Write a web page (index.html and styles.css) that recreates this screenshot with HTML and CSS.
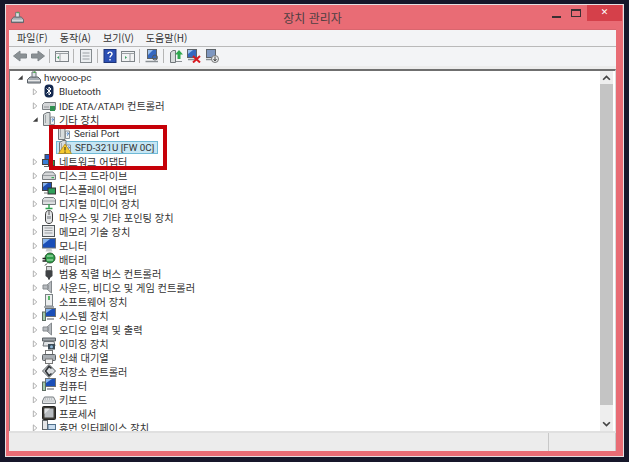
FILE: index.html
```html
<!DOCTYPE html>
<html lang="ko">
<head>
    <meta charset="UTF-8">
    <title>장치 관리자</title>
    <link rel="stylesheet" href="styles.css">
</head>
<body>

<svg class="sprite" xmlns="http://www.w3.org/2000/svg">
    <symbol id="open" viewBox="0 0 8 8"><path d="M1 6.500L6.500 1.500V6.500Z" fill="#3c3c3c"/></symbol>
    <symbol id="closed" viewBox="0 0 8 8"><path d="M1.500 1L5.500 4.500L1.500 8Z" fill="#fff" stroke="#a6a6a6"/></symbol>

    <symbol id="pc" viewBox="0 0 14 14"><path d="M0.500 9.500L3 7H11L13.500 9.500V13H0.500Z" fill="#a8aeb4" stroke="#5a6066"/><path d="M1 10.500H13" stroke="#e8e8e8"/><path d="M5 2H9V7H5Z" fill="#dde2e6" stroke="#6a7076"/><path d="M7.500 1L9 3H6Z" fill="#4fb04f"/></symbol>
    <symbol id="bt" viewBox="0 0 14 14"><rect x="2.500" y="0.500" width="9" height="13" rx="4" fill="#14294f"/><path d="M4.500 4.500L9 9L7 11V3L9 5L4.500 9.500" fill="none" stroke="#fff"/></symbol>
    <symbol id="ide" viewBox="0 0 14 14"><path d="M0.500 6.500L2.500 4.500H13.500V11.500H0.500Z" fill="#d4d6d8" stroke="#7b8084"/><rect x="8" y="8" width="5" height="5" fill="#2f8f4f"/><path d="M2 9H7" stroke="#909498"/></symbol>
    <symbol id="other" viewBox="0 0 14 14"><path d="M1.500 2.500L5 0.500H8V13.500H1.500Z" fill="#d8dcdc" stroke="#70767a"/><path d="M8.500 5H12.500V12.500H8.500Z" fill="#eef2f4" stroke="#8a9094"/><path d="M3.500 3V11" stroke="#a0a6aa"/><path d="M10 7.500C10 6.500 11.500 6.500 11.500 7.500C11.500 8.300 10.500 8.300 10.500 9.500" fill="none" stroke="#2f6fc0"/></symbol>
    <symbol id="warn" viewBox="0 0 14 14"><path d="M7 4L13.500 13.500H0.500Z" fill="#f6c92e" stroke="#a07a10" stroke-width="0.600"/><path d="M7 7V10.500M7 11.500V12.800" stroke="#222"/></symbol>
    <symbol id="net" viewBox="0 0 14 14"><rect x="3" y="0.500" width="6" height="5" fill="#2a5fc4" stroke="#444"/><rect x="0.500" y="5.500" width="6" height="5" fill="#3a7fd8" stroke="#444"/><rect x="6.500" y="6.500" width="6" height="5" fill="#2fa04a" stroke="#444"/><path d="M2 12.500H11" stroke="#666"/></symbol>
    <symbol id="disk" viewBox="0 0 14 14"><path d="M0.500 7L3 4H11L13.500 7V11.500H0.500Z" fill="#d4d6d8" stroke="#777c80"/><path d="M1 7.500H13" stroke="#9a9ea2"/><rect x="9.500" y="9" width="2.500" height="1.200" fill="#3aa655"/></symbol>
    <symbol id="display" viewBox="0 0 14 14"><rect x="0.500" y="0.500" width="9" height="8" fill="#1f4fb0" stroke="#444"/><path d="M1 1H6L1 5Z" fill="#8ab4ec"/><rect x="6" y="6" width="7.500" height="6" fill="#2f9f5a" stroke="#333"/><path d="M2 11H6" stroke="#777"/></symbol>
    <symbol id="media" viewBox="0 0 14 14"><path d="M0.500 3.500L2.500 1.500H11.500L13.500 3.500V8.500H0.500Z" fill="#dcdee0" stroke="#757a7e"/><path d="M1 5H13" stroke="#a0a4a8"/><path d="M7 8V12M3.500 12.500H10.500" stroke="#2fa050" stroke-width="1.400"/></symbol>
    <symbol id="mouse" viewBox="0 0 14 14"><path d="M3.500 5C3.500 1.500 5 0.500 7 0.500C9 0.500 10.500 1.500 10.500 5V10C10.500 12.500 9 13.500 7 13.500C5 13.500 3.500 12.500 3.500 10Z" fill="#e4e6e8" stroke="#3c3c3c"/><path d="M7 1V5" stroke="#555"/><path d="M5 6H9V9H5Z" fill="#a8acb0"/></symbol>
    <symbol id="memory" viewBox="0 0 14 14"><rect x="0.500" y="1.500" width="12" height="11" fill="#e6e8ea" stroke="#50565a"/><path d="M2.500 4H10.500M2.500 6.500H10.500M2.500 9H10.500" stroke="#9a9fa3"/></symbol>
    <symbol id="monitor" viewBox="0 0 14 14"><rect x="0.500" y="0.500" width="13" height="9.500" fill="#1a4fb8" stroke="#6a7074"/><path d="M1 1H8L1 6.500Z" fill="#8ab6ee"/><path d="M4.500 11H9.500L10.500 13.500H3.500Z" fill="#c8ccd0"/></symbol>
    <symbol id="battery" viewBox="0 0 14 14"><circle cx="8" cy="6" r="5" fill="#2f9f4a" stroke="#25572f"/><path d="M5 4H11M5 8H11" stroke="#bfe8c6"/><path d="M0.500 6.500H4M0.500 9H4" stroke="#222" stroke-width="1.300"/><path d="M5 11.500L3 13.500" stroke="#333"/></symbol>
    <symbol id="usb" viewBox="0 0 14 14"><rect x="4.500" y="0.500" width="5" height="4" fill="#d8dadc" stroke="#777"/><path d="M3.500 4.500H10.500V10L8 12V13.500H6V12L3.500 10Z" fill="#3f4245"/></symbol>
    <symbol id="sound" viewBox="0 0 14 14"><path d="M1 5H5L9.500 1V13L5 9H1Z" fill="#b8bcc0" stroke="#84898d"/><path d="M6 5V9" stroke="#72777b"/></symbol>
    <symbol id="soft" viewBox="0 0 14 14"><rect x="3.500" y="0.500" width="7" height="11.500" fill="#eceeee" stroke="#7c8286"/><rect x="6" y="2" width="2" height="4" fill="#58b868"/><path d="M2 13H12" stroke="#8a8f93" stroke-width="1.500"/></symbol>
    <symbol id="system" viewBox="0 0 14 14"><rect x="3.500" y="0.500" width="10" height="8" fill="#1a4fb8" stroke="#6a7074"/><path d="M4 1H10L4 5Z" fill="#8ab6ee"/><rect x="0.500" y="4" width="3" height="8.500" fill="#9fc9a8" stroke="#5b6a5f"/><path d="M5 11H12" stroke="#8a8f93" stroke-width="1.500"/></symbol>
    <symbol id="imaging" viewBox="0 0 14 14"><path d="M0.500 2H13.500V5H0.500Z" fill="#9da3a8" stroke="#5a6064"/><path d="M2 5.500H12L13 10H1Z" fill="#dfe2e4" stroke="#6a7074"/><rect x="6" y="8" width="7" height="5.500" fill="#3a4a55"/><circle cx="9.500" cy="10.800" r="1.500" fill="#8fb8d8"/></symbol>
    <symbol id="printer" viewBox="0 0 14 14"><rect x="3.500" y="0.500" width="7" height="4" fill="#fff" stroke="#777"/><rect x="0.500" y="4.500" width="13" height="6" rx="1" fill="#a8adb2" stroke="#5c6165"/><rect x="3.500" y="9" width="7" height="4.500" fill="#f4f4f4" stroke="#777"/></symbol>
    <symbol id="storage" viewBox="0 0 14 14"><path d="M7 0.500L13.500 7L7 13.500L0.500 7Z" fill="#d8dbde" stroke="#50565a"/><path d="M9.500 4.500L7 2.500L3.500 7L7 11.500L9.500 9.500" fill="none" stroke="#2e3236" stroke-width="1.600"/></symbol>
    <symbol id="keyboard" viewBox="0 0 14 14"><path d="M0.500 9L2.500 5H11.500L13.500 9V11.500H0.500Z" fill="#dfe2e4" stroke="#777c80"/><path d="M3 7H11M2.500 9H11.500" stroke="#9ea3a7" stroke-dasharray="1 1"/></symbol>
    <symbol id="cpu" viewBox="0 0 14 14"><rect x="0.500" y="0.500" width="13" height="13" rx="1" fill="#3c3a34" stroke="#222"/><rect x="2.500" y="2.500" width="9" height="9" fill="#b8bcc0"/><path d="M2.500 2.500H8L2.500 8Z" fill="#dfe1e3"/></symbol>
    <symbol id="hid" viewBox="0 0 14 14"><rect x="0.500" y="0.500" width="5" height="9" fill="#e4e6e8" stroke="#60666a"/><rect x="6" y="4.500" width="7.500" height="5" fill="#c9dcee" stroke="#50708c"/><path d="M1 12H13" stroke="#7c8286" stroke-width="1.500"/></symbol>

    <symbol id="back" viewBox="0 0 14 14"><path d="M0.500 7L7 2V5H13.500V9H7V12Z" fill="#8a9094" stroke="#80868a"/></symbol>
    <symbol id="forward" viewBox="0 0 14 14"><path d="M13.500 7L7 2V5H0.500V9H7V12Z" fill="#8a9094" stroke="#80868a"/></symbol>
    <symbol id="pane" viewBox="0 0 14 14"><rect x="0.500" y="2.500" width="13" height="10" fill="#f2f3f4" stroke="#7d8387"/><path d="M0.500 4.500H13.500M5 5V12" stroke="#9ba0a4"/><path d="M4 7V10L2 8.500Z" fill="#3aa060"/></symbol>
    <symbol id="props" viewBox="0 0 14 14"><rect x="1.500" y="0.500" width="11" height="13" fill="#eceff1" stroke="#858b8f"/><path d="M3.500 4H10.500M3.500 7H10.500M3.500 10H10.500" stroke="#9ca1a5"/></symbol>
    <symbol id="help" viewBox="0 0 14 14"><rect x="1" y="0.500" width="12" height="13" fill="#2b4fb4" stroke="#1c3378"/><path d="M5 5C5 2.500 9 2.500 9 5C9 6.500 7 6.500 7 8.500M7 10V11.500" fill="none" stroke="#fff" stroke-width="1.400"/></symbol>
    <symbol id="pane2" viewBox="0 0 14 14"><rect x="0.500" y="2.500" width="13" height="10" fill="#f2f3f4" stroke="#7d8387"/><path d="M0.500 4.500H13.500M9 5V12" stroke="#9ba0a4"/><path d="M4 7V10L6 8.500Z" fill="#3aa060"/></symbol>
    <symbol id="scan" viewBox="0 0 14 14"><rect x="2.500" y="0.500" width="9" height="9" fill="#3568c0" stroke="#5d6369"/><path d="M3 1H8L3 6Z" fill="#9cc0ee"/><path d="M0.500 12.500H13" stroke="#8a9094" stroke-width="1.500"/><circle cx="10" cy="8.500" r="2.500" fill="none" stroke="#50565a"/></symbol>
    <symbol id="update" viewBox="0 0 14 14"><path d="M1.500 3.500L4 1.500H6.500V13.500H1.500Z" fill="#d8dcdc" stroke="#70767a"/><path d="M7 12.500H13" stroke="#8c9195"/><path d="M10 1L14 5.500H11.500V10H8.500V5.500H6Z" fill="#2fa84f"/></symbol>
    <symbol id="remove" viewBox="0 0 14 14"><rect x="0.500" y="0.500" width="9" height="8" fill="#3568c0" stroke="#5d6369"/><path d="M1 1H6L1 5Z" fill="#9cc0ee"/><path d="M1 10.500H8" stroke="#8a9094" stroke-width="1.500"/><path d="M6 7L13 13.500M13 7L6 13.500" stroke="#d81c22" stroke-width="2"/></symbol>
    <symbol id="rollback" viewBox="0 0 14 14"><rect x="1.500" y="0.500" width="9" height="8" fill="#7d96c0" stroke="#5d6369"/><path d="M1 10.500H7" stroke="#8a9094" stroke-width="1.500"/><circle cx="10" cy="10" r="3.500" fill="#e8eaec" stroke="#777"/><path d="M10 7.500V11M8.500 10L10 12L11.500 10" fill="none" stroke="#444"/></symbol>
</svg>

<div class="window">
    <div class="titlebar">
        <svg class="title-icon"><use href="#pc"/></svg>
        <div class="title">장치 관리자</div>
        <div class="controls">
            <span class="btn-min"></span>
            <span class="btn-max"></span>
            <span class="btn-close">✕</span>
        </div>
    </div>

    <div class="menubar">
        <span>파일(F)</span>
        <span>동작(A)</span>
        <span>보기(V)</span>
        <span>도움말(H)</span>
    </div>

    <div class="toolbar">
        <svg class="tool"><use href="#back"/></svg>
        <svg class="tool"><use href="#forward"/></svg>
        <i class="sep"></i>
        <svg class="tool"><use href="#pane"/></svg>
        <i class="sep"></i>
        <svg class="tool"><use href="#props"/></svg>
        <i class="sep"></i>
        <svg class="tool"><use href="#help"/></svg>
        <svg class="tool"><use href="#pane2"/></svg>
        <i class="sep"></i>
        <svg class="tool"><use href="#scan"/></svg>
        <i class="sep"></i>
        <svg class="tool"><use href="#update"/></svg>
        <svg class="tool"><use href="#remove"/></svg>
        <svg class="tool"><use href="#rollback"/></svg>
    </div>

    <div class="content">
        <div class="tree">
            <div class="row lvl0"><svg class="exp"><use href="#open"/></svg><svg class="ico"><use href="#pc"/></svg><span class="lat">hwyooo-pc</span></div>
            <div class="row lvl1"><svg class="exp"><use href="#closed"/></svg><svg class="ico"><use href="#bt"/></svg><span class="lat">Bluetooth</span></div>
            <div class="row lvl1"><svg class="exp"><use href="#closed"/></svg><svg class="ico"><use href="#ide"/></svg><span><span class="lat">IDE ATA/ATAPI</span> 컨트롤러</span></div>
            <div class="row lvl1"><svg class="exp"><use href="#open"/></svg><svg class="ico"><use href="#other"/></svg><span>기타 장치</span></div>
            <div class="row lvl2"><svg class="ico"><use href="#other"/></svg><span class="lat">Serial Port</span></div>
            <div class="row lvl2 selected">
                <div class="sel"><span class="ico-wrap"><svg class="ico"><use href="#other"/></svg><svg class="ico over"><use href="#warn"/></svg></span><span class="lat">SFD-321U [FW 0C]</span></div>
            </div>
            <div class="row lvl1"><svg class="exp"><use href="#closed"/></svg><svg class="ico"><use href="#net"/></svg><span>네트워크 어댑터</span></div>
            <div class="row lvl1"><svg class="exp"><use href="#closed"/></svg><svg class="ico"><use href="#disk"/></svg><span>디스크 드라이브</span></div>
            <div class="row lvl1"><svg class="exp"><use href="#closed"/></svg><svg class="ico"><use href="#display"/></svg><span>디스플레이 어댑터</span></div>
            <div class="row lvl1"><svg class="exp"><use href="#closed"/></svg><svg class="ico"><use href="#media"/></svg><span>디지털 미디어 장치</span></div>
            <div class="row lvl1"><svg class="exp"><use href="#closed"/></svg><svg class="ico"><use href="#mouse"/></svg><span>마우스 및 기타 포인팅 장치</span></div>
            <div class="row lvl1"><svg class="exp"><use href="#closed"/></svg><svg class="ico"><use href="#memory"/></svg><span>메모리 기술 장치</span></div>
            <div class="row lvl1"><svg class="exp"><use href="#closed"/></svg><svg class="ico"><use href="#monitor"/></svg><span>모니터</span></div>
            <div class="row lvl1"><svg class="exp"><use href="#closed"/></svg><svg class="ico"><use href="#battery"/></svg><span>배터리</span></div>
            <div class="row lvl1"><svg class="exp"><use href="#closed"/></svg><svg class="ico"><use href="#usb"/></svg><span>범용 직렬 버스 컨트롤러</span></div>
            <div class="row lvl1"><svg class="exp"><use href="#closed"/></svg><svg class="ico"><use href="#sound"/></svg><span>사운드, 비디오 및 게임 컨트롤러</span></div>
            <div class="row lvl1"><svg class="exp"><use href="#closed"/></svg><svg class="ico"><use href="#soft"/></svg><span>소프트웨어 장치</span></div>
            <div class="row lvl1"><svg class="exp"><use href="#closed"/></svg><svg class="ico"><use href="#system"/></svg><span>시스템 장치</span></div>
            <div class="row lvl1"><svg class="exp"><use href="#closed"/></svg><svg class="ico"><use href="#sound"/></svg><span>오디오 입력 및 출력</span></div>
            <div class="row lvl1"><svg class="exp"><use href="#closed"/></svg><svg class="ico"><use href="#imaging"/></svg><span>이미징 장치</span></div>
            <div class="row lvl1"><svg class="exp"><use href="#closed"/></svg><svg class="ico"><use href="#printer"/></svg><span>인쇄 대기열</span></div>
            <div class="row lvl1"><svg class="exp"><use href="#closed"/></svg><svg class="ico"><use href="#storage"/></svg><span>저장소 컨트롤러</span></div>
            <div class="row lvl1"><svg class="exp"><use href="#closed"/></svg><svg class="ico"><use href="#system"/></svg><span>컴퓨터</span></div>
            <div class="row lvl1"><svg class="exp"><use href="#closed"/></svg><svg class="ico"><use href="#keyboard"/></svg><span>키보드</span></div>
            <div class="row lvl1"><svg class="exp"><use href="#closed"/></svg><svg class="ico"><use href="#cpu"/></svg><span>프로세서</span></div>
            <div class="row lvl1"><svg class="exp"><use href="#closed"/></svg><svg class="ico"><use href="#hid"/></svg><span>휴먼 인터페이스 장치</span></div>
            <div class="highlight"></div>
        </div>
        <div class="scrollbar">
            <svg class="arrow" viewBox="0 0 8 6"><path d="M1 5L4 2L7 5" fill="none" stroke="#444" stroke-width="1.500"/></svg>
            <div class="thumb"></div>
            <svg class="arrow" viewBox="0 0 8 6"><path d="M1 1L4 4L7 1" fill="none" stroke="#444" stroke-width="1.500"/></svg>
        </div>
    </div>

    <div class="statusbar">
        <div class="cell-main"></div>
        <div class="cell-end"></div>
    </div>
</div>

</body>
</html>
```

FILE: styles.css
```css
* {
    box-sizing: border-box;
}
body {
    margin: 0;
    height: 462px;
    overflow: hidden;
    padding: 4px 5px;
    background-color: #16172a;
    font-family: "Noto Sans CJK KR", "Noto Sans", sans-serif;
    font-size: 10.2px;
    color: #333;
}
.sprite {
    position: absolute;
    width: 0;
    height: 0;
}
.window {
    width: 619px;
    height: 453px;
    display: flex;
    flex-direction: column;
    border: 1px solid #e6dfe2;
    background-color: #e96c75;
    padding: 0 7px 5px 3px;
}
.titlebar {
    height: 24px;
    flex: none;
    display: flex;
    position: relative;
}
.title-icon {
    width: 13px;
    height: 14px;
    margin: 5px 0 0 2px;
}
.title {
    position: absolute;
    left: 0;
    right: 0;
    top: 4px;
    text-align: center;
    font-size: 12px;
    line-height: 18px;
    color: #4e3f42;
}
.controls {
    margin-left: auto;
    margin-right: -6px;
    display: flex;
    align-items: flex-start;
    position: relative;
}
.btn-min {
    width: 9px;
    height: 2px;
    margin: 11px 10px 0 0;
    background-color: #3a3033;
}
.btn-max {
    width: 10px;
    height: 8px;
    margin: 4px 6px 0 0;
    border: 1px solid #3a3033;
    border-top-width: 2px;
}
.btn-close {
    width: 35px;
    height: 16px;
    background-color: #d5404a;
    color: #fff;
    font-size: 9px;
    font-weight: bold;
    line-height: 15px;
    text-align: center;
    font-family: "DejaVu Sans", sans-serif;
}
.menubar {
    height: 18px;
    flex: none;
    display: flex;
    align-items: center;
    gap: 12px;
    padding: 0 0 1px 8px;
    font-size: 10px;
    background-color: #f3f4f6;
    border-top: 1px solid #d9666e;
    border-bottom: 1px solid #b9b9b9;
}
.toolbar {
    height: 22px;
    flex: none;
    display: flex;
    align-items: flex-start;
    padding: 2px 0 0 4px;
    background-color: #f3f4f6;
    border-bottom: 3px solid #ececec;
}
.tool {
    width: 14px;
    height: 14px;
    margin-right: 4px;
}
.sep {
    width: 1px;
    height: 14px;
    margin: 0 5px 0 0;
    background-color: #b5b5b5;
}
.content {
    flex: 1;
    min-height: 0;
    display: flex;
    background-color: #fff;
    border-top: 2px solid #6f6f6f;
    border-left: 1px solid #7c7c7c;
    border-right: 1px solid #dcdcdc;
}
.tree {
    flex: 1;
    position: relative;
    overflow: hidden;
}
.row {
    height: 14px;
    display: flex;
    align-items: center;
    white-space: nowrap;
}
.row:first-child {
    margin-top: -1px;
}
.lat {
    font-family: Roboto, sans-serif;
    font-size: 9.8px;
}
.lvl0 {
    padding-left: 7px;
}
.lvl1 {
    padding-left: 22px;
}
.lvl2 {
    padding-left: 47px;
}
.exp {
    width: 7px;
    height: 7px;
    margin-right: 3px;
}
.ico {
    width: 14px;
    height: 14px;
    margin-right: 3px;
    flex: none;
}
.selected {
    padding-left: 46px;
}
.sel {
    display: flex;
    align-items: center;
    width: 102px;
    height: 13px;
    padding-left: 1px;
    background-color: #c6e6f4;
    border: 1px solid #6fb9d6;
}
.ico-wrap {
    display: flex;
    position: relative;
    margin-right: 0;
}
.over {
    position: absolute;
    left: 0;
    top: 0;
}
.highlight {
    position: absolute;
    left: 39px;
    top: 54px;
    width: 118px;
    height: 45px;
    border: 4px solid #c60008;
}
.scrollbar {
    width: 13px;
    flex: none;
    margin-right: 2px;
    display: flex;
    flex-direction: column;
    background-color: #eeeeee;
}
.arrow {
    width: 13px;
    height: 13px;
    flex: none;
    padding: 3px 2px;
}
.thumb {
    height: 321px;
    flex: none;
    background-color: #c4c4c4;
}
.scrollbar .arrow:last-child {
    margin-top: auto;
}
.statusbar {
    height: 20px;
    flex: none;
    display: flex;
    background-color: #ececec;
    border-top: 2px solid #e0e0e0;
}
.cell-main {
    flex: 1;
    border-right: 1px solid #c8c8c8;
}
.cell-end {
    width: 67px;
    border-right: 1px solid #c8c8c8;
}
```
